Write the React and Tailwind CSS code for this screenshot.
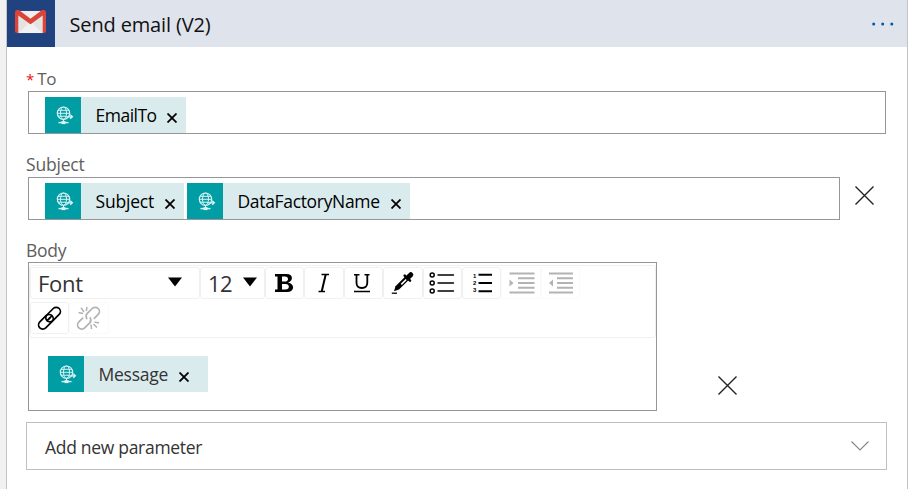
import React from "react";

function GmailIcon() {
  return (
    <svg width="31" height="24" viewBox="0 0 32 25" preserveAspectRatio="none" className="block">
      <path d="M2 1H30V24H2Z" fill="#e3e3e3" />
      <path d="M4 24L16 12L28 24Z" fill="#f1f1f1" />
      <path d="M4 5L16 15L28 5V1H4Z" fill="#d2d2d2" />
      <path d="M5 1H27L16 9.5Z" fill="#eeeeee" />
      <path d="M0 2.5Q0 0 2.5 0H4L16 9L28 0H29.5Q32 0 32 2.5V22Q32 24 30 24H28.6V5.8L16 14.8L3.4 5.8V24H2Q0 24 0 22Z" fill="#db4437" />
    </svg>
  );
}

function GlobeIcon() {
  return (
    <svg width="18" height="19" viewBox="0 0 18 19" fill="none" stroke="#d8f3f4" strokeWidth="1" className="ml-[3px] block">
      <circle cx="7.5" cy="7.2" r="6.2" strokeWidth="1.2" />
      <ellipse cx="7.5" cy="7.2" rx="3" ry="6.2" />
      <path d="M2 4.3H13M1.2 7.3H13.8M2 10.2H10M7.5 13V16" />
      <path d="M9.5 10.8H16M14.2 8.8L16.4 10.8L14.2 12.8" strokeWidth="1.3" />
      <path d="M2.5 16.6H12.5" strokeWidth="1.4" />
      <path d="M5.5 16.6H9.5" strokeWidth="3" />
    </svg>
  );
}

function Token({ label, className, textClass }) {
  return (
    <div className={"flex h-9 shrink-0 bg-[#daebed] " + className}>
      <div className="flex h-9 w-9 shrink-0 items-center justify-center bg-[#009da5]">
        <GlobeIcon />
      </div>
      <span className={"ml-[14.5px] text-[17.5px] leading-[37px] whitespace-nowrap " + textClass}>{label}</span>
      <svg width="10" height="10" viewBox="0 0 10 10" className="mt-[16px] mr-[9px] ml-auto shrink-0" stroke="#000" strokeWidth="1.8">
        <path d="M0.5 0.5L9.5 9.5M9.5 0.5L0.5 9.5" />
      </svg>
    </div>
  );
}

function Clear({ className }) {
  return (
    <svg width="19" height="19" viewBox="0 0 19 19" className={"shrink-0 " + className} stroke="#222" strokeWidth="1.35">
      <path d="M0.5 0.5L18.5 18.5M18.5 0.5L0.5 18.5" />
    </svg>
  );
}

function Tool({ children, faded }) {
  return (
    <div className={"flex h-8 w-[39.4px] shrink-0 items-center justify-center rounded-[3px] border " + (faded ? "border-[#fafafa]" : "border-[#f0f0f0]")}>
      {children}
    </div>
  );
}

function Caret() {
  return (
    <svg width="14" height="10" viewBox="0 0 14 10" className="mb-[2px] block">
      <path d="M0 0.5H14L7 9.5Z" />
    </svg>
  );
}

function Glyph({ children, color = "#000", className = "" }) {
  return (
    <svg width="26" height="24" viewBox="0 0 26 24" fill="none" stroke={color} strokeWidth="1.6" className={"block shrink-0 " + className}>
      {children}
    </svg>
  );
}

function Chain({ color, broken }) {
  return (
    <Glyph color={color}>
      <g transform="translate(12.5 12.2) rotate(-45)" strokeWidth="1.7" strokeLinecap="round">
        {broken ? (
          <>
            <path d="M-4 -4.2H-9.5A4.2 4.2 0 0 0 -9.5 4.2H-2.5Q0.5 4.2 1.5 1" />
            <path d="M4 4.2H9.5A4.2 4.2 0 0 0 9.5 -4.2H2.5Q-0.5 -4.2 -1.5 -1" />
          </>
        ) : (
          <>
            <path d="M3.5 0A4.2 4.2 0 0 0 -0.7 -4.2H-9.5A4.2 4.2 0 0 0 -9.5 4.2H-0.7A4.2 4.2 0 0 0 3.5 0H-0.5" />
            <path d="M-3.5 0A4.2 4.2 0 0 0 0.7 4.2H9.5A4.2 4.2 0 0 0 9.5 -4.2H0.7A4.2 4.2 0 0 0 -3.5 0H0.5" />
          </>
        )}
      </g>
      {broken && <path strokeWidth="1.5" d="M2.5 6.5L7 7.5M5 1.8L8 6M11 1L10.3 5M15 18.5L15.5 23M17.5 18L21 21.5M18.5 16L23 17" />}
    </Glyph>
  );
}

export default function App() {
  return (
    <div className="flex h-[489px] w-[908px] overflow-hidden bg-[#f1f1f1] font-['Open_Sans','Noto_Sans',sans-serif]">
      <div className="ml-[6px] flex w-[902px] flex-col border-x border-[#c4c4c4] bg-white">
        <header className="flex h-[47px] shrink-0 items-center bg-[#dfe3ec]">
          <div className="flex h-[47px] w-12 items-center justify-center bg-[#20427f] pr-px pb-[3px]">
            <GmailIcon />
          </div>
          <h1 className="ml-[14.5px] pt-px text-[20px] leading-[47px] tracking-[-0.15px] text-[#111]">Send email (V2)</h1>
          <svg width="22" height="4" viewBox="0 0 22 4" fill="#0058ad" className="mr-[13px] ml-auto">
            <circle cx="1.7" cy="2" r="1.5" />
            <circle cx="10.7" cy="2" r="1.5" />
            <circle cx="19.8" cy="2" r="1.5" />
          </svg>
        </header>

        <main className="flex flex-col pl-[19px] text-black">
          <label className="mt-5 flex h-6 text-[17px] leading-6 tracking-[-0.5px] text-[#605e5c]">
            <span className="mr-[3.5px] text-[15px] text-[#e8111c]">*</span>To
          </label>
          <div className="ml-[2px] flex h-[43px] w-[858px] items-end border border-[#969696] pl-4">
            <Token label="EmailTo" className="w-[141px]" textClass="tracking-[-0.5px]" />
          </div>

          <label className="mt-[18px] h-[26px] text-[17.5px] leading-6 tracking-[-0.2px] text-[#605e5c]">Subject</label>
          <div className="ml-[2px] mt-[-1px] flex">
            <div className="flex h-[43px] w-[812px] items-end gap-[3px] border border-[#969696] pl-4">
              <Token label="Subject" className="w-[139px]" textClass="tracking-[-0.2px]" />
              <Token label="DataFactoryName" className="w-[223px]" textClass="tracking-[-0.33px]" />
            </div>
            <Clear className="mt-[9px] ml-[15px]" />
          </div>

          <label className="mt-[18px] h-[24px] text-[17.5px] leading-6 tracking-[-0.3px] text-[#605e5c]">Body</label>
          <div className="ml-[2px] flex">
            <div className="h-[149px] w-[629px] border border-[#969696]">
              <div className="mt-[2px] flex h-[73px] flex-col gap-[3px] rounded-[3px] border border-[#f0f0f0] pt-px">
                <div className="flex h-8">
                  <div className="flex h-8 w-[170px] items-center justify-between rounded-[3px] border border-[#f0f0f0] pr-[17px] pl-[7px] text-[22px] text-[#333]">
                    <span className="tracking-[-0.3px]">Font</span>
                    <Caret />
                  </div>
                  <div className="flex h-8 w-[65px] items-center justify-between rounded-[3px] border border-[#f0f0f0] pr-[7px] pl-[7px] text-[22px] text-[#333]">
                    <span className="tracking-[-0.7px]">12</span>
                    <Caret />
                  </div>
                  <Tool>
                    <Glyph className="mr-[2px]">
                      <g fill="#000" stroke="none">
                        <path fillRule="evenodd" d="M4 3H15.5C22.5 3 22.5 10 17 11.5C24 12.5 24 21 16 21H4V18.5H6.5V5.5H4ZM11 5.5V10.6H14C18 10.6 18 5.5 14 5.5ZM11 13V18.5H14.5C19 18.5 19 13 14.5 13Z" />
                      </g>
                    </Glyph>
                  </Tool>
                  <Tool>
                    <Glyph className="mr-px">
                      <path d="M10.5 3.5H18M7.5 20.5H14" strokeWidth="1.5" />
                      <path d="M14.7 3.5L10.7 20.5" strokeWidth="2" />
                    </Glyph>
                  </Tool>
                  <Tool>
                    <Glyph className="mr-[2px]">
                      <path d="M5 3.7H10.5M15.5 3.7H20.5M5 20.5H21" strokeWidth="1.5" />
                      <path d="M7.5 3.7V11.5Q7.5 17 12.8 17Q18.3 17 18.3 11.5V3.7" strokeWidth="1.8" />
                    </Glyph>
                  </Tool>
                  <Tool>
                    <Glyph className="mr-px">
                      <path d="M2.8 22.2H8" strokeWidth="1.3" />
                      <path d="M5 20.2L6.5 15.2L17 4.8L20.5 8.2L10 18.6Z" fill="#000" stroke="none" />
                      <path d="M12.3 13.4L17.2 8.5" stroke="#fff" strokeWidth="1.6" />
                      <path d="M15.7 4.6L21 9.6" strokeWidth="2.6" strokeLinecap="round" />
                      <path d="M19.5 6L21.8 3.7" strokeWidth="5" strokeLinecap="round" />
                    </Glyph>
                  </Tool>
                  <Tool>
                    <Glyph>
                      <circle cx="3.2" cy="4" r="2" strokeWidth="1.5" />
                      <circle cx="3.2" cy="12" r="2" strokeWidth="1.5" />
                      <circle cx="3.2" cy="20" r="2" strokeWidth="1.5" />
                      <path d="M9 4H24.5M9 12H24.5M9 20H24.5" strokeWidth="1.4" strokeLinecap="round" />
                    </Glyph>
                  </Tool>
                  <Tool>
                    <Glyph>
                      <g fill="#000" stroke="none" fontFamily="Liberation Sans, sans-serif" fontWeight="bold" fontSize="6">
                        <text x="4" y="7">1</text>
                        <text x="4" y="14.2">2</text>
                        <text x="4" y="21.4">3</text>
                      </g>
                      <path d="M9.5 3.8H23M9.5 12H23M9.5 20.2H23" strokeWidth="2" />
                    </Glyph>
                  </Tool>
                  <Tool faded>
                    <Glyph color="#b3b3b3" className="ml-[2px]">
                      <path d="M0.5 2.5H25.5M0.5 21.5H25.5M9 7.3H25.5M9 12H25.5M9 16.7H25.5" strokeWidth="1.9" />
                      <path d="M0.5 8.5V15.5L4.5 12Z" fill="#b3b3b3" stroke="none" />
                    </Glyph>
                  </Tool>
                  <Tool faded>
                    <Glyph color="#b3b3b3" className="ml-[2px]">
                      <path d="M1 2.5H25M1 21.5H25M9 7.3H25M9 12H25M9 16.7H25" strokeWidth="1.9" />
                      <path d="M5 8.5V15.5L1 12Z" fill="#b3b3b3" stroke="none" />
                    </Glyph>
                  </Tool>
                </div>
                <div className="flex h-8">
                  <Tool><Chain /></Tool>
                  <Tool faded><Chain color="#b3b3b3" broken /></Tool>
                </div>
              </div>
              <div className="mt-[18px] ml-[19px] flex">
                <Token label="Message" className="w-[160px] [&>svg]:mr-[19px]" textClass="tracking-[-0.25px] text-[#333]" />
              </div>
            </div>
            <Clear className="mt-[114px] ml-[61px]" />
          </div>

          <div className="mt-[11px] flex h-12 w-[861px] items-center justify-between border border-[#bfbfbf] pr-[17px] pl-[18px]">
            <span className="pt-[3px] text-[17.5px] tracking-[-0.3px] text-[#333]">Add new parameter</span>
            <svg width="18" height="10" viewBox="0 0 18 10" fill="none" stroke="#888" strokeWidth="1.2">
              <path d="M0.5 0.5L9 9L17.5 0.5" />
            </svg>
          </div>
        </main>
      </div>
    </div>
  );
}
